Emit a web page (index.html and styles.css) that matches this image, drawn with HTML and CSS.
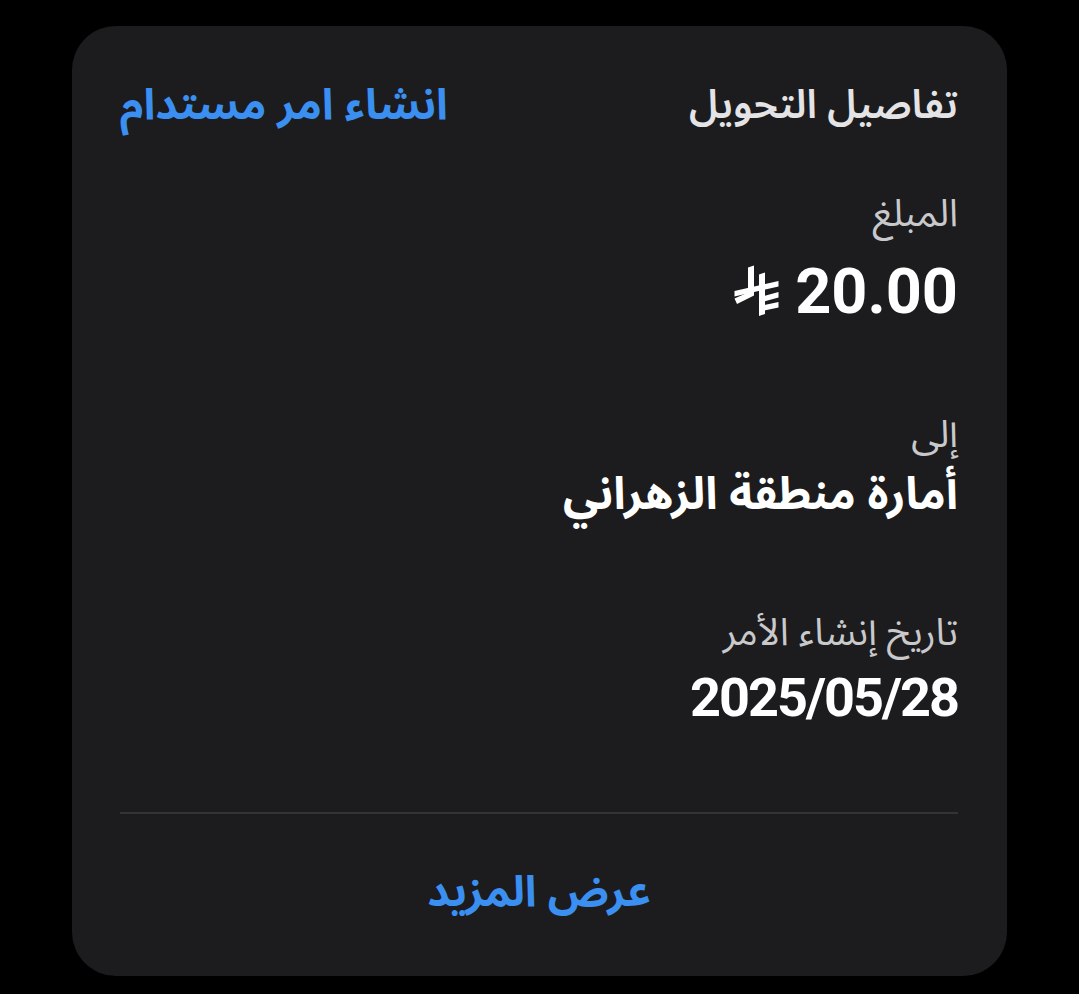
FILE: index.html
```html
<!DOCTYPE html>
<html lang="ar" dir="rtl">
<head>
<meta charset="utf-8">
<link rel="stylesheet" href="styles.css">
</head>
<body>
<div class="card">
  <div class="header">
    <span class="title">تفاصيل التحويل</span>
    <span class="action">انشاء امر مستدام</span>
  </div>
  <div class="field f-amount">
    <div class="label">المبلغ</div>
    <div class="value amount">
      <span class="num">20.00</span>
      <svg class="riyal" viewBox="6 0 46 54" width="46" height="54" aria-hidden="true">
        <polygon fill="#fff" points="20,3.5 26,1.5 26,31.5 9,40 6.5,34.5 20,28.5"/>
        <polygon fill="#fff" points="31,10.5 37,8.5 37,50 31,52"/>
        <polygon fill="#fff" points="6.5,27 50.5,17 50.5,22.5 6.5,32.5"/>
        <polygon fill="#fff" points="36,32 50.5,28 50.5,33.5 36,37.5"/>
        <polygon fill="#fff" points="31,42 50.5,38 50.5,43.5 31,47.5"/>
      </svg>
    </div>
  </div>
  <div class="field f-to">
    <div class="label">إلى</div>
    <div class="value name">أمارة منطقة الزهراني</div>
  </div>
  <div class="field f-date">
    <div class="label">تاريخ إنشاء الأمر</div>
    <div class="value date">2025/05/28</div>
  </div>
  <div class="divider"></div>
  <div class="more">عرض المزيد</div>
</div>
</body>
</html>
```
FILE: styles.css
```css
html, body {
  margin: 0;
  padding: 0;
  background: #000;
}
body {
  width: 1079px;
  height: 994px;
  overflow: hidden;
  font-family: "Noto Sans Arabic", "Noto Naskh Arabic", "DejaVu Sans", sans-serif;
}
.card {
  margin: 26px 72px 0 72px;
  width: 935px;
  height: 950px;
  box-sizing: border-box;
  background: #1c1c1e;
  border-radius: 44px;
  padding: 50px 49px 0 48px;
  display: flex;
  flex-direction: column;
}
.header {
  display: flex;
  justify-content: space-between;
  align-items: center;
  height: 60px;
}
.title {
  color: #e4e4e6;
  font-size: 40px;
  font-weight: 600;
  line-height: 60px;
}
.action {
  color: #3a8ff0;
  font-size: 43px;
  font-weight: 700;
  line-height: 60px;
}
.field {
  display: flex;
  flex-direction: column;
  align-items: flex-start;
}
.f-amount { margin-top: 56px; }
.f-to { margin-top: 86px; }
.f-date { margin-top: 86px; }
.label {
  color: #c9c9cc;
  font-size: 38px;
  line-height: 44px;
}
.value {
  color: #fff;
}
.amount {
  display: flex;
  align-items: center;
  gap: 15px;
  height: 70px;
  margin-top: 21px;
}
.num {
  font-family: Roboto, "Liberation Sans", sans-serif;
  font-size: 63px;
  font-weight: 700;
  line-height: 70px;
  direction: ltr;
}
.riyal {
  display: block;
  margin-top: -2px;
}
.name {
  font-size: 45px;
  font-weight: 700;
  line-height: 60px;
  margin-top: 8px;
}
.date {
  font-family: Roboto, "Liberation Sans", sans-serif;
  font-size: 54px;
  font-weight: 700;
  letter-spacing: -2px;
  line-height: 60px;
  direction: ltr;
  margin-top: 13px;
}
.divider {
  margin-top: 84px;
  height: 2px;
  background: #333335;
}
.more {
  margin-top: 49px;
  line-height: 60px;
  text-align: center;
  color: #3a8ff0;
  font-size: 43px;
  font-weight: 700;
}
```
